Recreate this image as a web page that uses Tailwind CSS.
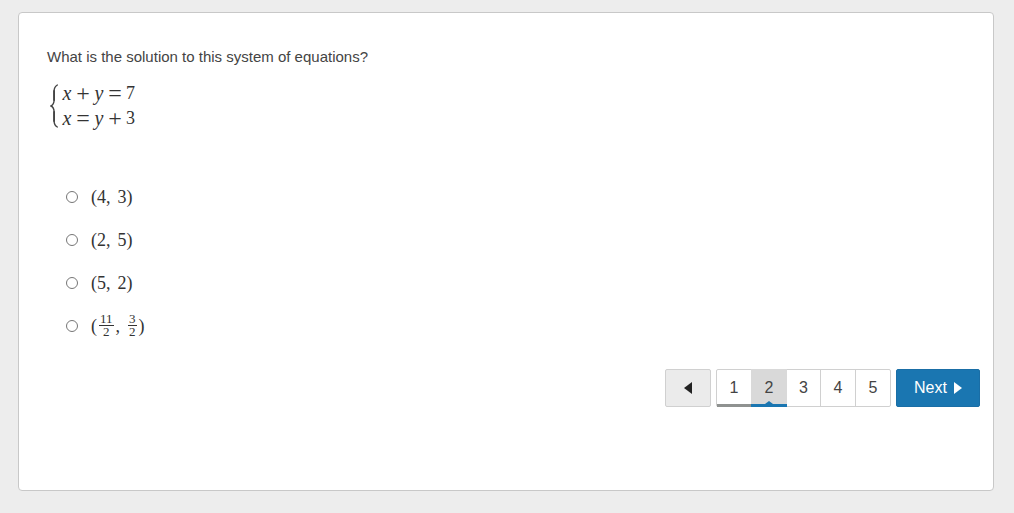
<!DOCTYPE html>
<html lang="en">
<head>
  <meta charset="UTF-8" />
  <meta name="viewport" content="width=device-width, initial-scale=1.0"/>
  <title>Systems of Equations</title>
  <script src="https://cdn.jsdelivr.net/npm/@tailwindcss/browser@4"></script>
</head>
<body class="bg-[#ededed] min-h-screen flex flex-col pl-[18px] pr-5 pt-3 pb-[22px] font-['Liberation_Sans',Arial,sans-serif] text-[#444]">
  <main class="flex-1 bg-white border border-[#c8c8c8] rounded">
    <form id="quizForm">
      <div class="px-7 pt-8">
        <h1 class="text-[15px] leading-6">What is the solution to this system of equations?</h1>

        <!-- System of equations -->
        <div class="flex items-center gap-1 mt-3 pl-[3px] font-['Liberation_Serif',serif] text-[#333]">
          <svg class="w-2 h-11" viewBox="0 0 8 44" fill="none" stroke="#444" stroke-width="1.4" stroke-linecap="round">
            <path d="M7.3 1C4.8 2.4 4.1 4.2 4.1 7V16C4.1 19.2 3.4 20.8 1 22C3.4 23.2 4.1 24.8 4.1 28V37C4.1 39.8 4.8 41.6 7.3 43" />
            <path d="M4.1 7V16M4.1 28V37" stroke-width="1.8" />
          </svg>
          <div class="grid grid-cols-[10px_14px_10px_14px_9px] gap-x-1 items-center justify-items-center text-lg leading-[25px]">
            <i class="text-xl leading-[25px]">x</i>
            <span class="text-2xl leading-[25px]">+</span>
            <i class="text-xl leading-[25px]">y</i>
            <span class="text-2xl leading-[25px]">=</span>
            <span>7</span>
            <i class="text-xl leading-[25px]">x</i>
            <span class="text-2xl leading-[25px]">=</span>
            <i class="text-xl leading-[25px]">y</i>
            <span class="text-2xl leading-[25px]">+</span>
            <span>3</span>
          </div>
        </div>
      </div>

      <!-- Answers -->
      <fieldset aria-label="Answers" class="mt-11 pl-[47px] font-['Liberation_Serif',serif] text-lg text-[#333]">
        <label class="flex w-fit items-center gap-[13px] h-[43px]">
          <input type="radio" name="answer" value="a" class="appearance-none size-3 rounded-full border border-[#767676] bg-white checked:border-4 checked:border-[#1a76b1]" />
          <span class="flex gap-[7px]"><span>(4,</span> <span>3)</span></span>
        </label>
        <label class="flex w-fit items-center gap-[13px] h-[43px]">
          <input type="radio" name="answer" value="b" class="appearance-none size-3 rounded-full border border-[#767676] bg-white checked:border-4 checked:border-[#1a76b1]" />
          <span class="flex gap-[7px]"><span>(2,</span> <span>5)</span></span>
        </label>
        <label class="flex w-fit items-center gap-[13px] h-[43px]">
          <input type="radio" name="answer" value="c" class="appearance-none size-3 rounded-full border border-[#767676] bg-white checked:border-4 checked:border-[#1a76b1]" />
          <span class="flex gap-[7px]"><span>(5,</span> <span>2)</span></span>
        </label>
        <label class="flex w-fit items-center gap-[13px] h-[43px]">
          <input type="radio" name="answer" value="d" class="appearance-none size-3 rounded-full border border-[#767676] bg-white checked:border-4 checked:border-[#1a76b1]" />
          <span class="flex items-center">
            <span>(</span>
            <span class="flex flex-col text-center text-[13px] leading-3 mx-0.5">
              <span class="border-b border-[#333] px-px">11</span>
              <span>2</span>
            </span>
            <span>,</span>
            <span class="flex flex-col text-center text-[13px] leading-3 ml-2 mr-0.5">
              <span class="border-b border-[#333] px-px">3</span>
              <span>2</span>
            </span>
            <span>)</span>
          </span>
        </label>
      </fieldset>

      <!-- Pagination -->
      <nav class="mt-[22px] pr-[13px] flex justify-end gap-[5px] h-[38px] text-base" aria-label="Questions">
        <button type="button" aria-label="Previous" class="w-[46px] flex items-center justify-center bg-[#ebebeb] border border-[#d0d0d0] rounded-xs">
          <svg class="w-2 h-3" viewBox="0 0 8 12" fill="#222"><path d="M8 0V12L0 6Z" /></svg>
        </button>
        <div class="flex border border-[#d0d0d0] rounded-xs">
          <button type="button" class="w-[34px] -mb-px border-b-3 border-[#8f9290] pt-px">1</button>
          <button type="button" aria-current="page" class="relative w-9 -my-px bg-[#d9d9d9] border-b-3 border-[#1a76b1] pt-0.5">
            2
            <svg class="absolute bottom-0 left-1/2 -translate-x-1/2 w-2 h-[3px]" viewBox="0 0 8 3" fill="#1a76b1"><path d="M0 3L4 0L8 3Z" /></svg>
          </button>
          <button type="button" class="w-[33px] pb-px">3</button>
          <button type="button" class="w-[35px] pb-px border-l border-[#d0d0d0]">4</button>
          <button type="button" class="w-[35px] pb-px border-l border-[#d0d0d0]">5</button>
        </div>
        <button type="submit" class="w-[84px] flex items-center justify-center gap-[7px] bg-[#1a76b1] text-white border border-[#1a6ea6] rounded-xs">
          Next
          <svg class="w-2 h-3" viewBox="0 0 8 12" fill="white"><path d="M0 0V12L8 6Z" /></svg>
        </button>
      </nav>
    </form>
  </main>

  <script>
    const form = document.querySelector("#quizForm");

    form.addEventListener("submit", (e) => {
      e.preventDefault();
    });
  </script>
</body>
</html>
